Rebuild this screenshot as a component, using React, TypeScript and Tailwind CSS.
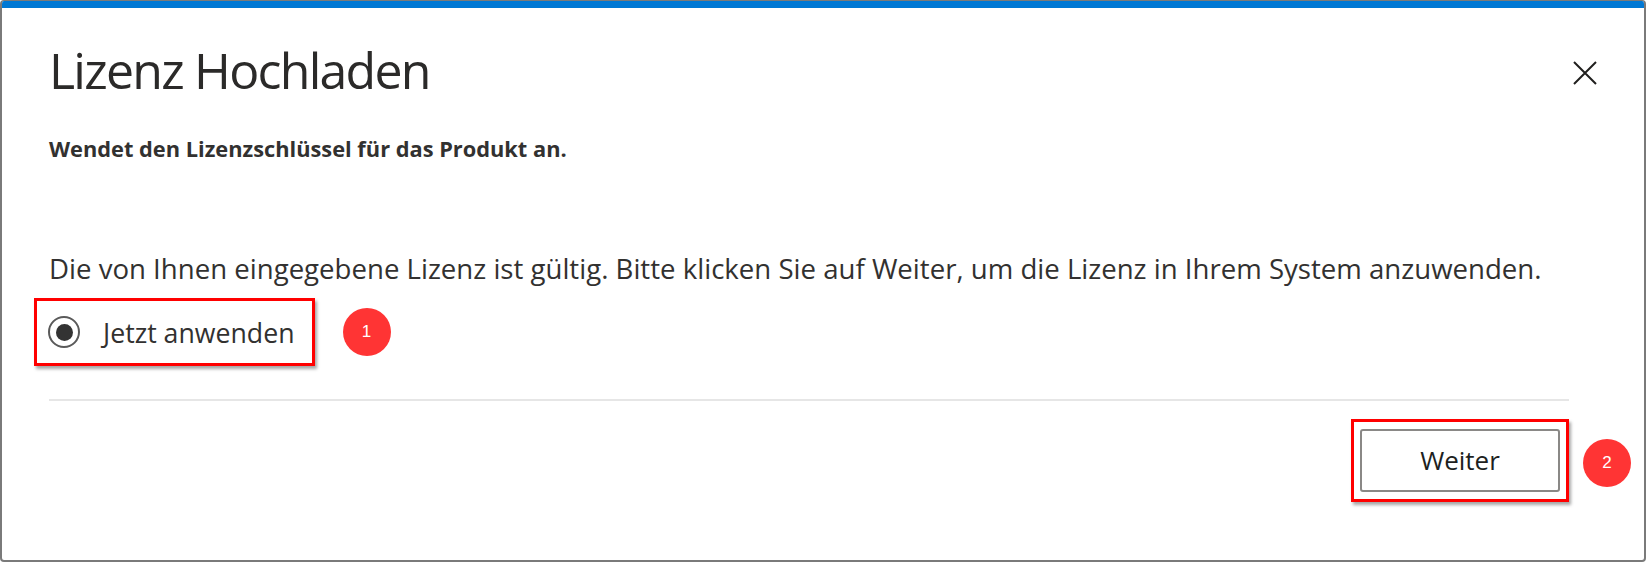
function Badge({ n }: { n: number }) {
  return (
    <span className="flex h-[48px] w-[48px] items-center justify-center rounded-full bg-[#ff3434] font-['Liberation_Sans',sans-serif] text-[17px] text-white">
      {n}
    </span>
  );
}

function Marker({ children, className = "" }: { children: React.ReactNode; className?: string }) {
  return (
    <div className={`border-[3px] border-[#ff0000] shadow-[2px_3px_3px_rgba(0,0,0,0.35)] ${className}`}>{children}</div>
  );
}

export default function App() {
  return (
    <div className="flex h-[562px] w-[1646px] flex-col overflow-hidden rounded-[4px] border-2 border-t border-[#7a7a7a] bg-white font-['Open_Sans',sans-serif] text-[#323130]">
      <div className="h-[7px] shrink-0 bg-[#0078d4]" />
      <div className="flex flex-1 flex-col pl-[47px] pr-[47px]">
        <div className="flex items-start justify-between">
          <h1 className="mt-[37px] text-[50px] leading-[50px] tracking-[-1.75px] text-[#2b2a29]">Lizenz Hochladen</h1>
          <button className="mt-[53px] text-[#201f1e]">
            <svg width="24" height="24" viewBox="0 0 24 24" fill="none" stroke="currentColor" strokeWidth="2">
              <path d="M1 1L23 23M23 1L1 23" />
            </svg>
          </button>
        </div>
        <p className="mt-[43px] text-[21.8px] font-bold leading-[22px]">Wendet den Lizenzschlüssel für das Produkt an.</p>
        <p className="mt-[94px] text-[27.6px] leading-[28px]">
          Die von Ihnen eingegebene Lizenz ist gültig. Bitte klicken Sie auf Weiter, um die Lizenz in Ihrem System anzuwenden.
        </p>
        <div className="mt-[16px] flex items-center">
          <Marker className="-ml-[15px] flex h-[68px] items-center pl-[11px] pr-[17px]">
            <span className="flex h-[32px] w-[32px] items-center justify-center rounded-full border-2 border-[#5a5a5a]">
              <span className="h-[17px] w-[17px] rounded-full bg-[#333333]" />
            </span>
            <span className="ml-[23px] text-[26.7px] leading-[27px]">Jetzt anwenden</span>
          </Marker>
          <span className="ml-[28px]">
            <Badge n={1} />
          </span>
        </div>
        <div className="mr-[28px] mt-[33px] h-[2px] bg-[#e6e6e6]" />
        <div className="mr-[28px] mt-[18px] flex justify-end">
          <div className="relative">
            <Marker className="px-[6px] py-[7px]">
              <button className="h-[63px] w-[200px] rounded-[3px] border-2 border-[#8a8886] bg-white text-[26px] text-[#201f1e]">
                Weiter
              </button>
            </Marker>
            <span className="absolute left-[232px] top-[20px]">
              <Badge n={2} />
            </span>
          </div>
        </div>
      </div>
    </div>
  );
}
